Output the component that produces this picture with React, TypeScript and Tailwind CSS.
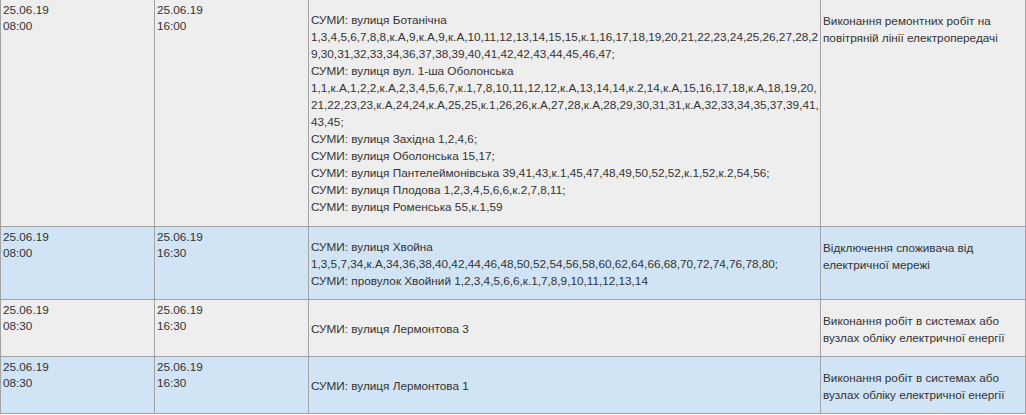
import React from 'react';

interface Outage {
  start: [string, string];
  end: [string, string];
  addresses: string[];
  reason: string[];
  height: string;
  blue: boolean;
}

const rows: Outage[] = [
  {
    start: ['25.06.19', '08:00'],
    end: ['25.06.19', '16:00'],
    addresses: [
      'СУМИ: вулиця Ботанічна',
      '1,3,4,5,6,7,8,8,к.А,9,к.А,9,к.А,10,11,12,13,14,15,15,к.1,16,17,18,19,20,21,22,23,24,25,26,27,28,2',
      '9,30,31,32,33,34,36,37,38,39,40,41,42,42,43,44,45,46,47;',
      'СУМИ: вулиця вул. 1-ша Оболонська',
      '1,1,к.А,1,2,2,к.А,2,3,4,5,6,7,к.1,7,8,10,11,12,12,к.А,13,14,14,к.2,14,к.А,15,16,17,18,к.А,18,19,20,',
      '21,22,23,23,к.А,24,24,к.А,25,25,к.1,26,26,к.А,27,28,к.А,28,29,30,31,31,к.А,32,33,34,35,37,39,41,',
      '43,45;',
      'СУМИ: вулиця Західна 1,2,4,6;',
      'СУМИ: вулиця Оболонська 15,17;',
      'СУМИ: вулиця Пантелеймонівська 39,41,43,к.1,45,47,48,49,50,52,52,к.1,52,к.2,54,56;',
      'СУМИ: вулиця Плодова 1,2,3,4,5,6,6,к.2,7,8,11;',
      'СУМИ: вулиця Роменська 55,к.1,59',
    ],
    reason: ['Виконання ремонтних робіт на', 'повітряній лінії електропередачі'],
    height: 'h-[227px]',
    blue: false,
  },
  {
    start: ['25.06.19', '08:00'],
    end: ['25.06.19', '16:30'],
    addresses: [
      'СУМИ: вулиця Хвойна',
      '1,3,5,7,34,к.А,34,36,38,40,42,44,46,48,50,52,54,56,58,60,62,64,66,68,70,72,74,76,78,80;',
      'СУМИ: провулок Хвойний 1,2,3,4,5,6,6,к.1,7,8,9,10,11,12,13,14',
    ],
    reason: ['Відключення споживача від', 'електричної мережі'],
    height: 'h-[73px]',
    blue: true,
  },
  {
    start: ['25.06.19', '08:30'],
    end: ['25.06.19', '16:30'],
    addresses: ['СУМИ: вулиця Лермонтова 3'],
    reason: ['Виконання робіт в системах або', 'вузлах обліку електричної енергії'],
    height: 'h-[57px]',
    blue: false,
  },
  {
    start: ['25.06.19', '08:30'],
    end: ['25.06.19', '16:30'],
    addresses: ['СУМИ: вулиця Лермонтова 1'],
    reason: ['Виконання робіт в системах або', 'вузлах обліку електричної енергії'],
    height: 'h-[57px]',
    blue: true,
  },
];

const cell = 'border border-[#a3a3a3] px-[2px] align-top';

export default function App() {
  return (
    <div className="w-[1026px] h-[415px] overflow-hidden bg-white font-['Liberation_Sans',Arial,sans-serif] text-[11.75px] text-[#333333]">
      <table className="-mt-px w-[1025px] table-fixed border-collapse">
        <colgroup>
          <col className="w-[154px]" />
          <col className="w-[154px]" />
          <col className="w-[512px]" />
          <col className="w-[205px]" />
        </colgroup>
        <tbody>
          {rows.map((r, i) => (
            <tr key={i} className={`${r.height} ${r.blue ? 'bg-[#d1e4f5]' : 'bg-[#eeeeee]'}`}>
              <td className={`${cell} pt-[2px] leading-4`}>
                <div>{r.start[0]}</div>
                <div>{r.start[1]}</div>
              </td>
              <td className={`${cell} pt-[2px] leading-4`}>
                <div>{r.end[0]}</div>
                <div>{r.end[1]}</div>
              </td>
              <td className="border border-[#a3a3a3] px-[2px] align-middle leading-[17px] whitespace-nowrap">
                {r.addresses.map((a, j) => (
                  <div key={j}>{a}</div>
                ))}
              </td>
              <td className={`${cell} pt-[12px] leading-[17px] whitespace-nowrap`}>
                {r.reason.map((t, j) => (
                  <div key={j}>{t}</div>
                ))}
              </td>
            </tr>
          ))}
        </tbody>
      </table>
    </div>
  );
}
